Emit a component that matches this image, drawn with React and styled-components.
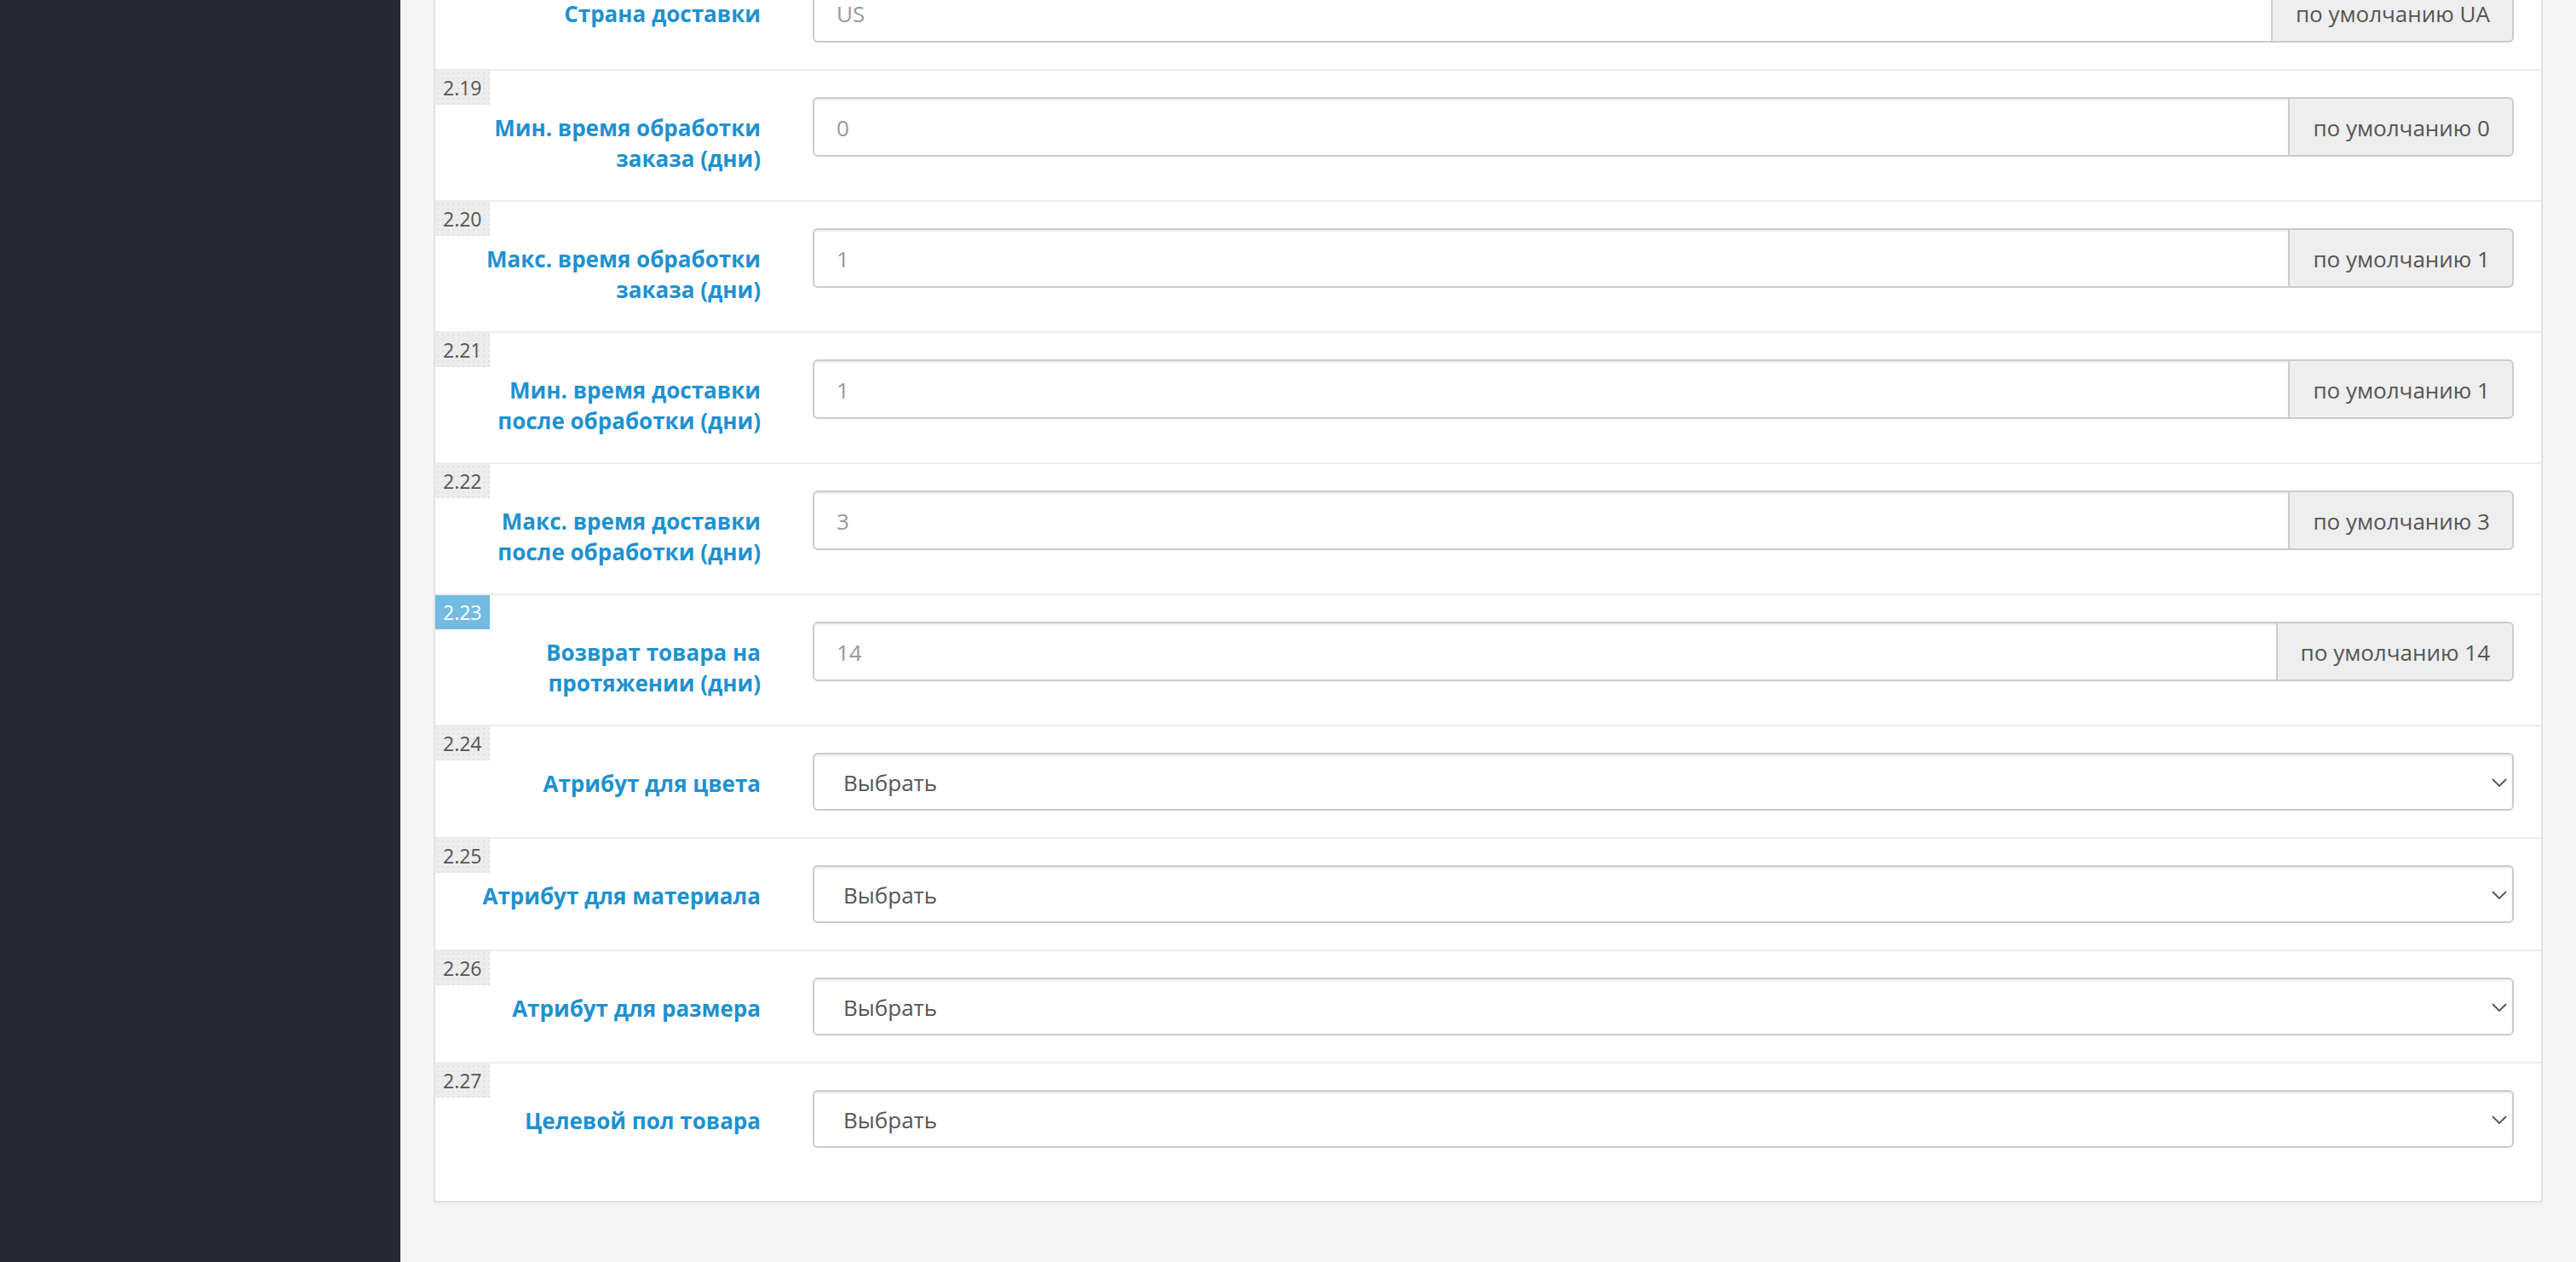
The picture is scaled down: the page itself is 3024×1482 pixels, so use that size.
import React from "react";
import styled, { createGlobalStyle } from "styled-components";

const GlobalStyle = createGlobalStyle`
  html, body {
    margin: 0;
    padding: 0;
    background: #f5f5f5;
    font-family: 'Open Sans', 'Liberation Sans', sans-serif;
  }
  * { box-sizing: border-box; }
`;

const Page = styled.div`
  display: flex;
  width: 3024px;
  height: 1482px;
  overflow: hidden;
`;

const Sidebar = styled.aside`
  flex: 0 0 470px;
  background: #242a35;
`;

const Content = styled.main`
  flex: 1;
  padding: 0 39px 0 39px;
`;

// page is scrolled: the top of the panel sits above the viewport
const Panel = styled.section`
  margin-top: -60px;
  background: #fff;
  border: 2px solid #dfe3e7;
  box-shadow: 0 3px 0 rgba(0, 0, 0, 0.025);
`;

const PanelBody = styled.div`
  padding: 5px 0 31px 0;
`;

const Row = styled.div`
  position: relative;
  display: grid;
  grid-template-columns: 382px 1fr;
  column-gap: 61px;
  align-items: start;
  padding: 31px 32px 31px 0;
  border-top: 2px solid #ececec;
`;

const Badge = styled.span`
  position: absolute;
  top: 0;
  left: 0;
  height: 40px;
  min-width: 63px;
  padding: 0 9px;
  font-size: 23px;
  line-height: 40px;
  color: ${(p) => (p.$active ? "#fff" : "#555")};
  background-color: ${(p) => (p.$active ? "#73bbe1" : "#ededed")};
  background-image: ${(p) =>
    p.$active ? "none" : "radial-gradient(#e0e0e0 1px, transparent 1px)"};
  background-size: 6px 6px;
`;

const Label = styled.label`
  display: block;
  padding: 18px 0 0 30px;
  text-align: right;
  font-size: 26px;
  line-height: 36px;
  font-weight: 700;
  color: #1e91cf;
  white-space: pre-line;
`;

const InputGroup = styled.div`
  display: flex;
  height: 70px;
`;

const TextInput = styled.input`
  flex: 1;
  min-width: 0;
  height: 100%;
  padding: 2px 26px 0 26px;
  border: 2px solid #ccc;
  border-radius: 6px 0 0 6px;
  box-shadow: inset 0 2px 2px rgba(0, 0, 0, 0.075);
  font-family: inherit;
  font-size: 26px;
  color: #555;
  outline: none;

  &::placeholder {
    color: #999;
  }
`;

const Addon = styled.span`
  display: flex;
  align-items: center;
  padding: 2px 26px 0 27px;
  background: #eee;
  border: 2px solid #ccc;
  border-left: 0;
  border-radius: 0 6px 6px 0;
  font-size: 26px;
  color: #555;
  white-space: nowrap;
`;

const SelectWrap = styled.div`
  position: relative;
  height: 68px;
`;

const Select = styled.select`
  appearance: none;
  width: 100%;
  height: 100%;
  padding: 2px 60px 0 34px;
  border: 2px solid #ccc;
  border-radius: 6px;
  background: #fff;
  box-shadow: inset 0 2px 2px rgba(0, 0, 0, 0.075);
  font-family: inherit;
  font-size: 26px;
  color: #555;
  outline: none;
`;

const Chevron = styled.svg`
  position: absolute;
  right: 8px;
  top: 50%;
  width: 18px;
  height: 10px;
  margin-top: -4px;
  pointer-events: none;
`;

const fields = [
  { label: "Страна доставки", value: "US", addon: "по умолчанию UA" },
  { num: "2.19", label: "Мин. время обработки\nзаказа (дни)", value: "0", addon: "по умолчанию 0" },
  { num: "2.20", label: "Макс. время обработки\nзаказа (дни)", value: "1", addon: "по умолчанию 1" },
  { num: "2.21", label: "Мин. время доставки\nпосле обработки (дни)", value: "1", addon: "по умолчанию 1" },
  { num: "2.22", label: "Макс. время доставки\nпосле обработки (дни)", value: "3", addon: "по умолчанию 3" },
  { num: "2.23", label: "Возврат товара на\nпротяжении (дни)", value: "14", addon: "по умолчанию 14", active: true },
  { num: "2.24", label: "Атрибут для цвета", select: true },
  { num: "2.25", label: "Атрибут для материала", select: true },
  { num: "2.26", label: "Атрибут для размера", select: true },
  { num: "2.27", label: "Целевой пол товара", select: true },
];

const App = () => {
  return (
    <Page>
      <GlobalStyle />
      <Sidebar />
      <Content>
        <Panel>
          <PanelBody>
            {fields.map((field, index) => (
              <Row key={index}>
                {field.num && <Badge $active={field.active}>{field.num}</Badge>}
                <Label>{field.label}</Label>
                {field.select ? (
                  <SelectWrap>
                    <Select defaultValue="">
                      <option value="">Выбрать</option>
                    </Select>
                    <Chevron viewBox="0 0 18 10">
                      <path d="M1 1 L9 9 L17 1" fill="none" stroke="#555" strokeWidth="1.8" />
                    </Chevron>
                  </SelectWrap>
                ) : (
                  <InputGroup>
                    <TextInput type="text" placeholder={field.value} />
                    <Addon>{field.addon}</Addon>
                  </InputGroup>
                )}
              </Row>
            ))}
          </PanelBody>
        </Panel>
      </Content>
    </Page>
  );
};

export default App;
